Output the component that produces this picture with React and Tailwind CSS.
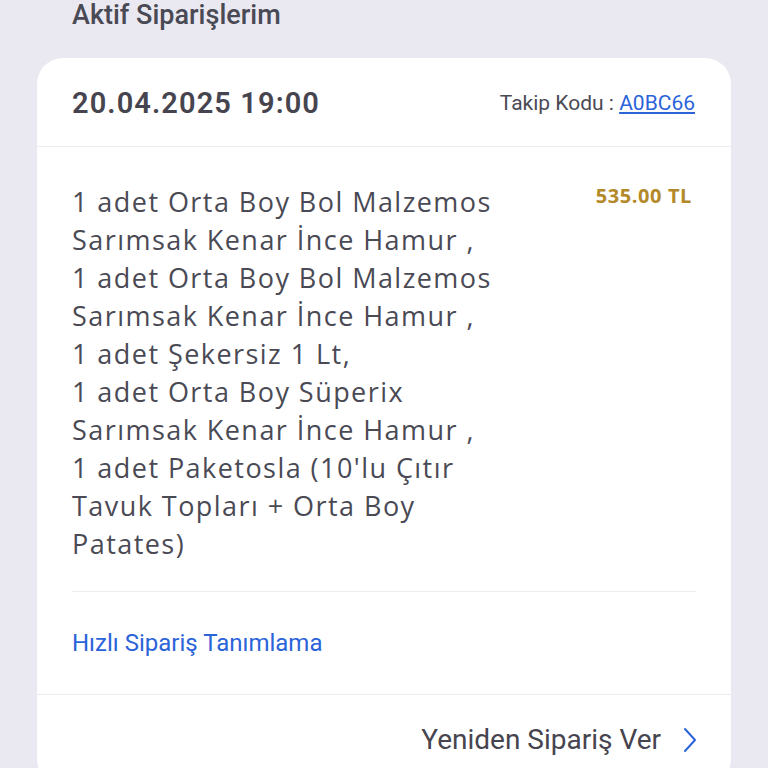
export default function App() {
  const lines = [
    "1 adet Orta Boy Bol Malzemos",
    "Sarımsak Kenar İnce Hamur ,",
    "1 adet Orta Boy Bol Malzemos",
    "Sarımsak Kenar İnce Hamur ,",
    "1 adet Şekersiz 1 Lt,",
    "1 adet Orta Boy Süperix",
    "Sarımsak Kenar İnce Hamur ,",
    "1 adet Paketosla (10'lu Çıtır",
    "Tavuk Topları + Orta Boy",
    "Patates)",
  ];
  return (
    <div className="w-[768px] h-[768px] overflow-hidden bg-[#eae9f1]" style={{ fontFamily: "'Open Sans', Lato, sans-serif" }}>
      <div className="h-[58px] pl-[72px] pt-[1px]">
        <div className="text-[27px] font-medium text-[#4a4a55] leading-[28px]" style={{ fontFamily: "Roboto, sans-serif" }}>Aktif Siparişlerim</div>
      </div>
      <div className="mx-[37px] bg-white rounded-[26px]">
        <div className="h-[89px] flex items-center justify-between pl-[35px] pr-[36px] pt-[4px] border-b border-[#ececf0]">
          <div className="text-[29px] font-semibold text-[#46454f] tracking-[1.1px]" style={{ fontFamily: "Roboto, sans-serif" }}>20.04.2025 19:00</div>
          <div className="text-[21px] text-[#4a4a55]" style={{ fontFamily: "Roboto, sans-serif" }}>
            Takip Kodu : <span className="text-[#2b63d9] underline">A0BC66</span>
          </div>
        </div>
        <div className="mx-[35px] pt-[36px] pb-[28px] flex justify-between border-b border-[#ececf0]">
          <div className="text-[27px] leading-[38px] text-[#4a4a55] tracking-[1.45px]">
            {lines.map((t, i) => (
              <div key={i} className="whitespace-nowrap">{t}</div>
            ))}
          </div>
          <div className="text-[20px] font-bold text-[#b3892a] tracking-[0.6px] pr-[4px] -mt-[2px]">535.00 TL</div>
        </div>
        <div className="h-[103px] flex items-center px-[35px] border-b border-[#ececf0]">
          <div className="text-[24px] text-[#2b63d9]" style={{ fontFamily: "Roboto, sans-serif" }}>Hızlı Sipariş Tanımlama</div>
        </div>
        <div className="h-[90px] flex items-center justify-end pr-[34px]">
          <span className="text-[28px] text-[#46454f]" style={{ fontFamily: "Roboto, sans-serif" }}>Yeniden Sipariş Ver</span>
          <svg width="14" height="26" viewBox="0 0 14 26" className="ml-[22px]" fill="none" stroke="#2b63d9" strokeWidth="2" strokeLinecap="round" strokeLinejoin="round">
            <path d="M2 2 L12 13 L2 24" />
          </svg>
        </div>
      </div>
    </div>
  );
}
